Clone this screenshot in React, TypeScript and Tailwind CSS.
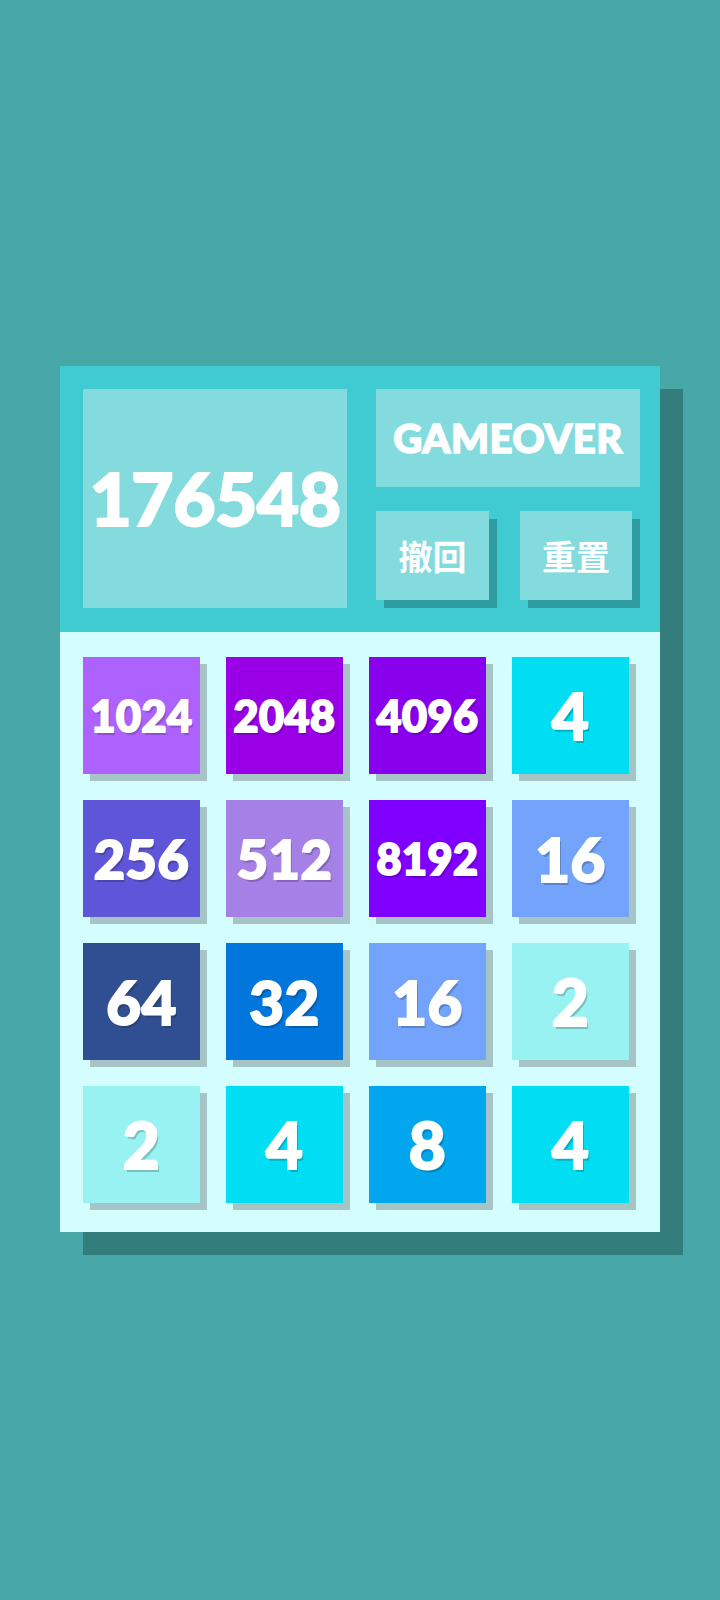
import React from "react";

type Tile = { value: number; bg: string };

const tiles: Tile[] = [
  { value: 1024, bg: "bg-[#ae62fd]" },
  { value: 2048, bg: "bg-[#9a00e5]" },
  { value: 4096, bg: "bg-[#8800ec]" },
  { value: 4, bg: "bg-[#01def3]" },
  { value: 256, bg: "bg-[#5e55d9]" },
  { value: 512, bg: "bg-[#a581e7]" },
  { value: 8192, bg: "bg-[#7f00fe]" },
  { value: 16, bg: "bg-[#74a3fb]" },
  { value: 64, bg: "bg-[#304f92]" },
  { value: 32, bg: "bg-[#0176dc]" },
  { value: 16, bg: "bg-[#74a3fb]" },
  { value: 2, bg: "bg-[#98f2f1]" },
  { value: 2, bg: "bg-[#98f2f1]" },
  { value: 4, bg: "bg-[#01def3]" },
  { value: 8, bg: "bg-[#02a6ee]" },
  { value: 4, bg: "bg-[#01def3]" },
];

// bigger numbers get smaller type so they fit the tile
const sizeFor = (n: number) => {
  const len = String(n).length;
  if (len >= 4) return "text-[43px]";
  if (len === 3) return "text-[54px]";
  if (len === 2) return "text-[60px]";
  return "text-[64px]";
};

function NumberTile({ tile }: { tile: Tile }) {
  return (
    <div
      className={`${tile.bg} w-[117px] h-[117px] flex items-center justify-center shadow-[7px_7px_0_#a6c4c5]`}
    >
      <span
        className={`${sizeFor(tile.value)} font-black text-white leading-none tracking-[0.5px] [-webkit-text-stroke:2px_white] [text-shadow:2px_3px_0_rgba(0,0,0,0.2)]`}
      >
        {tile.value}
      </span>
    </div>
  );
}

export default function App() {
  return (
    <div className="min-h-[1600px] bg-[#48a7a7] flex justify-center pt-[366px] font-['Lato','Noto_Sans',sans-serif]">
      <div className="w-[600px] h-[866px] shadow-[23px_23px_0_#337d7c]">
        {/* header: score + status + controls */}
        <div className="h-[266px] bg-[#40cbd3] flex pl-[23px] pt-[23px]">
          <div className="w-[264px] h-[219px] bg-[#84dbde] flex items-center justify-center">
            <span className="text-white font-black text-[73px] leading-none tracking-[-0.5px] [-webkit-text-stroke:2px_white]">
              176548
            </span>
          </div>
          <div className="ml-[29px] w-[264px] flex flex-col">
            <div className="h-[98px] bg-[#84dbde] flex items-center justify-center">
              <span className="text-white font-black text-[40px] leading-none tracking-[0.5px] [-webkit-text-stroke:1.5px_white]">
                GAMEOVER
              </span>
            </div>
            <div className="mt-[24px] flex gap-[31px]">
              <button className="w-[113px] h-[89px] bg-[#84dbde] shadow-[8px_8px_0_#2e9ba0] flex items-center justify-center text-white font-bold text-[34px] leading-none font-['Noto_Sans_CJK_SC',sans-serif]">
                撤回
              </button>
              <button className="w-[112px] h-[89px] bg-[#84dbde] shadow-[8px_8px_0_#2e9ba0] flex items-center justify-center text-white font-bold text-[34px] leading-none font-['Noto_Sans_CJK_SC',sans-serif]">
                重置
              </button>
            </div>
          </div>
        </div>

        {/* board */}
        <div className="h-[600px] bg-[#d4fefe] pl-[23px] pt-[25px]">
          <div className="grid grid-cols-[repeat(4,117px)] gap-[26px]">
            {tiles.map((t, i) => (
              <NumberTile key={i} tile={t} />
            ))}
          </div>
        </div>
      </div>
    </div>
  );
}
